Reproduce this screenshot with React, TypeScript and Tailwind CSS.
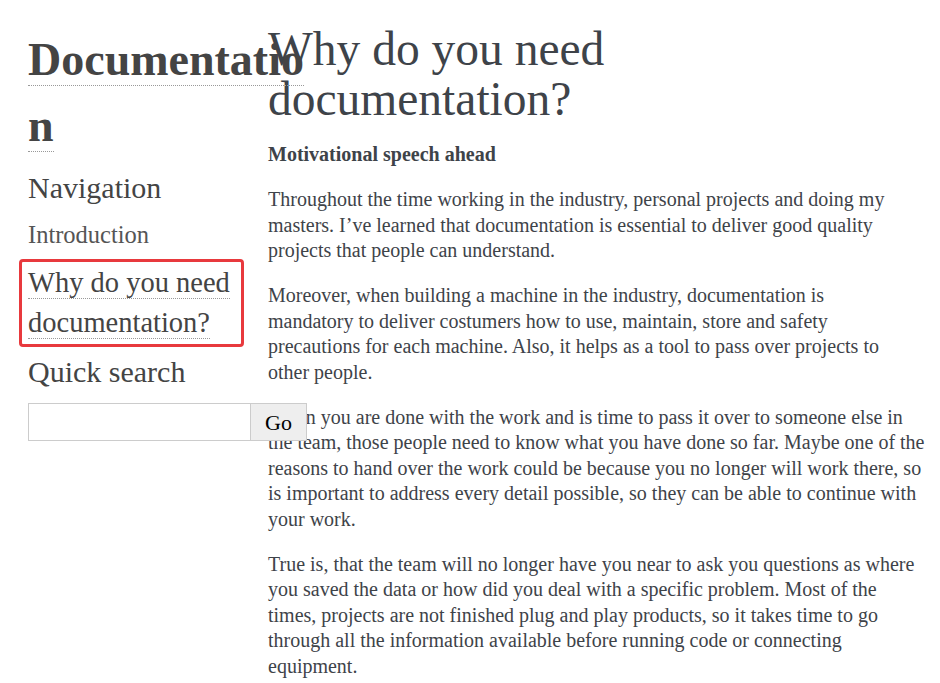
import React from "react";

const serif = "font-['Liberation_Serif','Times_New_Roman',serif]";

function SideLink({ children }: { children: React.ReactNode }) {
  return <a className="border-b border-dotted border-[#999] text-[#444] no-underline">{children}</a>;
}

const paragraphs: string[][] = [
  [
    "Throughout the time working in the industry, personal projects and doing my",
    "masters. I’ve learned that documentation is essential to deliver good quality",
    "projects that people can understand.",
  ],
  [
    "Moreover, when building a machine in the industry, documentation is",
    "mandatory to deliver costumers how to use, maintain, store and safety",
    "precautions for each machine. Also, it helps as a tool to pass over projects to",
    "other people.",
  ],
  [
    "When you are done with the work and is time to pass it over to someone else in",
    "the team, those people need to know what you have done so far. Maybe one of the",
    "reasons to hand over the work could be because you no longer will work there, so",
    "is important to address every detail possible, so they can be able to continue with",
    "your work.",
  ],
  [
    "True is, that the team will no longer have you near to ask you questions as where",
    "you saved the data or how did you deal with a specific problem. Most of the",
    "times, projects are not finished plug and play products, so it takes time to go",
    "through all the information available before running code or connecting",
    "equipment.",
  ],
];

export default function App() {
  return (
    <div className={`min-h-screen bg-white text-[#3e4349] ${serif}`}>
      <div className="flex pl-[28px]">
        <aside className="relative z-10 w-[240px] shrink-0 pt-[27px]">
          <h1 className="w-[300px] text-[46px] font-bold leading-[66px] text-[#444]">
            <SideLink>
              Documentatio
              <br />n
            </SideLink>
          </h1>
          <h3 className="mt-[11px] text-[30px] leading-[36px] text-[#444]">Navigation</h3>
          <ul className="mt-[11px]">
            <li className="text-[24.5px] leading-[36px] text-[#555]">
              <a>Introduction</a>
            </li>
            <li className="-ml-[9px] mt-[6px] w-[225px] rounded-[4px] border-[3px] border-[#e8393d] px-[6px] py-[1px] text-[28.5px] leading-[40px]">
              <SideLink>Why do you need</SideLink>
              <br />
              <SideLink>documentation?</SideLink>
            </li>
          </ul>
          <h3 className="mt-[7px] text-[30px] leading-[36px] text-[#444]">Quick search</h3>
          <form className="mt-[13px] flex w-[290px]">
            <input type="text" className="h-[38px] w-[223px] shrink-0 border border-[#ccc] bg-white px-1 outline-none" />
            <button type="button" className="-ml-px h-[38px] w-[57px] shrink-0 border border-[#ccc] bg-[#eee] text-[22px] text-black">
              Go
            </button>
          </form>
        </aside>

        <main className="w-[672px] pt-[24px]">
          <h1 className="text-[47.5px] leading-[50px] font-normal">
            Why do you need
            <br />
            documentation?
          </h1>
          <p className="mt-[18px] text-[20px] font-bold leading-[25.5px]">Motivational speech ahead</p>
          <div className="mt-[19.5px] space-y-[19.5px] text-[20px] leading-[25.5px]">
            {paragraphs.map((lines, i) => (
              <p key={i} className="whitespace-nowrap">
                {lines.map((line, j) => (
                  <React.Fragment key={j}>
                    {line}
                    {j < lines.length - 1 && <br />}
                  </React.Fragment>
                ))}
              </p>
            ))}
          </div>
        </main>
      </div>
    </div>
  );
}
